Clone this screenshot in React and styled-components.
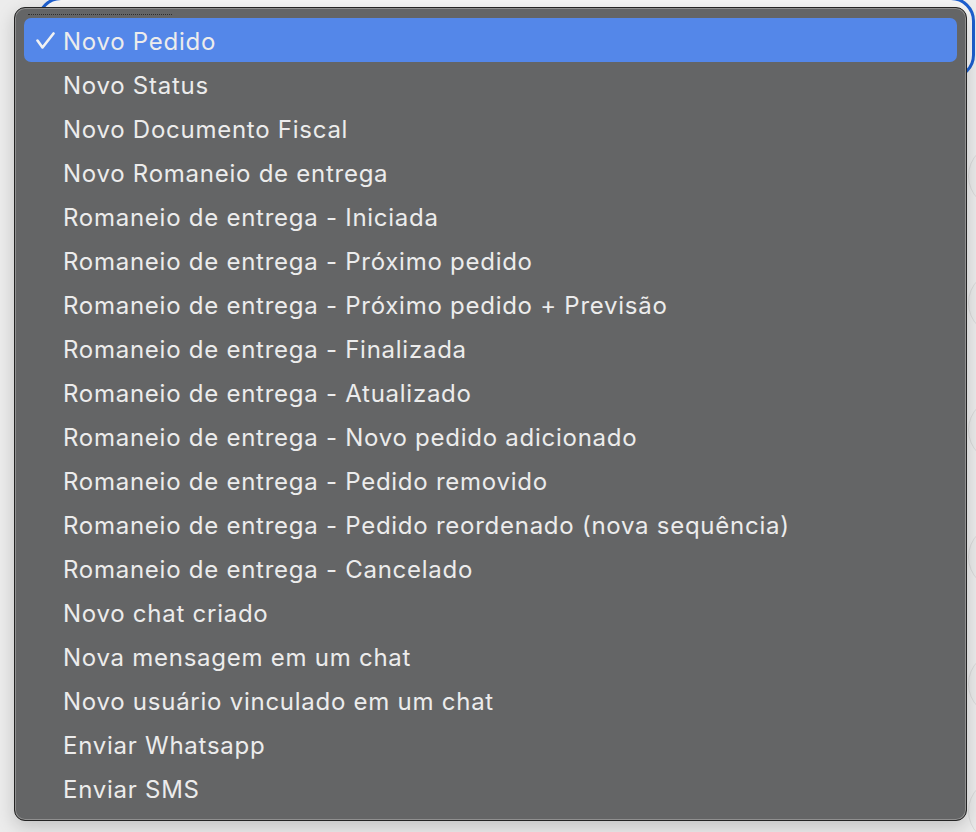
import styled, { createGlobalStyle } from 'styled-components'

const items = [
	'Novo Pedido',
	'Novo Status',
	'Novo Documento Fiscal',
	'Novo Romaneio de entrega',
	'Romaneio de entrega - Iniciada',
	'Romaneio de entrega - Próximo pedido',
	'Romaneio de entrega - Próximo pedido + Previsão',
	'Romaneio de entrega - Finalizada',
	'Romaneio de entrega - Atualizado',
	'Romaneio de entrega - Novo pedido adicionado',
	'Romaneio de entrega - Pedido removido',
	'Romaneio de entrega - Pedido reordenado (nova sequência)',
	'Romaneio de entrega - Cancelado',
	'Novo chat criado',
	'Nova mensagem em um chat',
	'Novo usuário vinculado em um chat',
	'Enviar Whatsapp',
	'Enviar SMS',
]

const App = () => {
	return (
		<Page>
			<GlobalStyle />

			<Backdrop>
				<Field />

				<Toggles>
					{[0, 1, 2, 3, 4, 5].map((i) => (
						<Toggle key={i} />
					))}
				</Toggles>
			</Backdrop>

			<Menu>
				<Dots />

				{items.map((label, i) => (
					<Item key={label} $active={i === 0}>
						{i === 0 && (
							<Check viewBox="0 0 20 20">
								<path d="M2.5 10.5 L7.5 17.5 L18.5 3.5" />
							</Check>
						)}
						{label}
					</Item>
				))}
			</Menu>
		</Page>
	)
}

export default App

const GlobalStyle = createGlobalStyle`
	html, body {
		margin: 0;
		padding: 0;
	}

	body {
		font-family: Inter, "Noto Sans", "Liberation Sans", sans-serif;
		background: #ececec;
	}
`

const Page = styled.div`
	position: relative;
	width: 976px;
	height: 832px;
	overflow: hidden;
	background: #ececec;
`

const Backdrop = styled.div`
	display: flex;
	flex-direction: column;
`

const Field = styled.div`
	margin: -3px 0 0 37px;
	width: 938px;
	height: 82px;
	box-sizing: border-box;
	border: 3px solid #1d5fcf;
	border-radius: 24px;
	background: #f6f6f6;
`

const Toggles = styled.div`
	display: flex;
	flex-direction: column;
	gap: 61px;
	margin: 64px 0 0 968px;
`

const Toggle = styled.div`
	width: 64px;
	height: 64px;
	flex: none;
	border-radius: 50%;
	border: 1px solid #dadada;
	background: #eaeaea;
`

const Menu = styled.div`
	position: absolute;
	left: 14px;
	top: 7px;
	width: 953px;
	height: 814px;
	box-sizing: border-box;
	padding: 10px 9px;
	background: #646566;
	border: 1px solid #242424;
	border-radius: 11px;
	box-shadow: inset 0 0 0 1px #8f8f8f, 0 6px 18px rgba(0, 0, 0, 0.18);
	display: flex;
	flex-direction: column;
`

const Dots = styled.div`
	position: absolute;
	left: 13px;
	top: 6px;
	width: 144px;
	border-top: 1px dotted #2e2e2e;
`

const Item = styled.div`
	position: relative;
	height: 44px;
	flex: none;
	display: flex;
	align-items: center;
	padding: 2px 0 0 39px;
	box-sizing: border-box;
	border-radius: 7px;
	font-size: 24px;
	letter-spacing: 0.74px;
	color: #ececec;
	background: ${(p) => (p.$active ? '#5487e9' : 'transparent')};
	white-space: nowrap;
`

const Check = styled.svg`
	position: absolute;
	left: 11px;
	top: 12px;
	width: 20px;
	height: 20px;
	fill: none;
	stroke: #f2f2f2;
	stroke-width: 2.6;
	stroke-linecap: round;
	stroke-linejoin: round;
`
